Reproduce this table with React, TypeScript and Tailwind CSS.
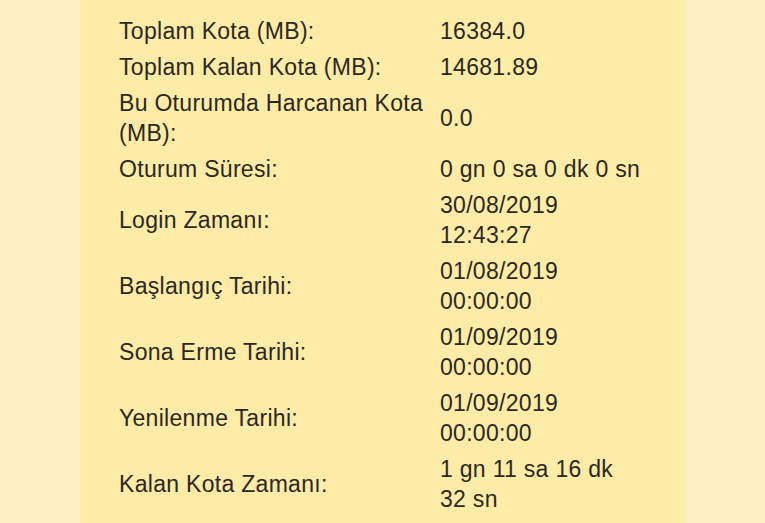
import React from "react";

const rows: { label: string; value: string[] }[] = [
  { label: "Toplam Kota (MB):", value: ["16384.0"] },
  { label: "Toplam Kalan Kota (MB):", value: ["14681.89"] },
  { label: "Bu Oturumda Harcanan Kota (MB):", value: ["0.0"] },
  { label: "Oturum Süresi:", value: ["0 gn 0 sa 0 dk 0 sn"] },
  { label: "Login Zamanı:", value: ["30/08/2019", "12:43:27"] },
  { label: "Başlangıç Tarihi:", value: ["01/08/2019", "00:00:00"] },
  { label: "Sona Erme Tarihi:", value: ["01/09/2019", "00:00:00"] },
  { label: "Yenilenme Tarihi:", value: ["01/09/2019", "00:00:00"] },
  { label: "Kalan Kota Zamanı:", value: ["1 gn 11 sa 16 dk", "32 sn"] },
];

export default function App() {
  return (
    <div
      className="w-[765px] h-[523px] overflow-hidden bg-[#fef0c2] flex"
      style={{ fontFamily: '"Liberation Sans", Arial, sans-serif' }}
    >
      <div className="ml-[80px] w-[606px] h-full bg-[#fdeba8] pl-[39px] pt-[13px]">
        <div className="grid grid-cols-[321px_215px] text-[23px] leading-[30px] tracking-[0.3px] text-[#2c281f]">
          {rows.map((r) => (
            <React.Fragment key={r.label}>
              <div className="flex items-center py-[3px] pr-2">{r.label}</div>
              <div className="flex flex-col justify-center py-[3px]">
                {r.value.map((v) => (
                  <div key={v}>{v}</div>
                ))}
              </div>
            </React.Fragment>
          ))}
        </div>
      </div>
    </div>
  );
}
